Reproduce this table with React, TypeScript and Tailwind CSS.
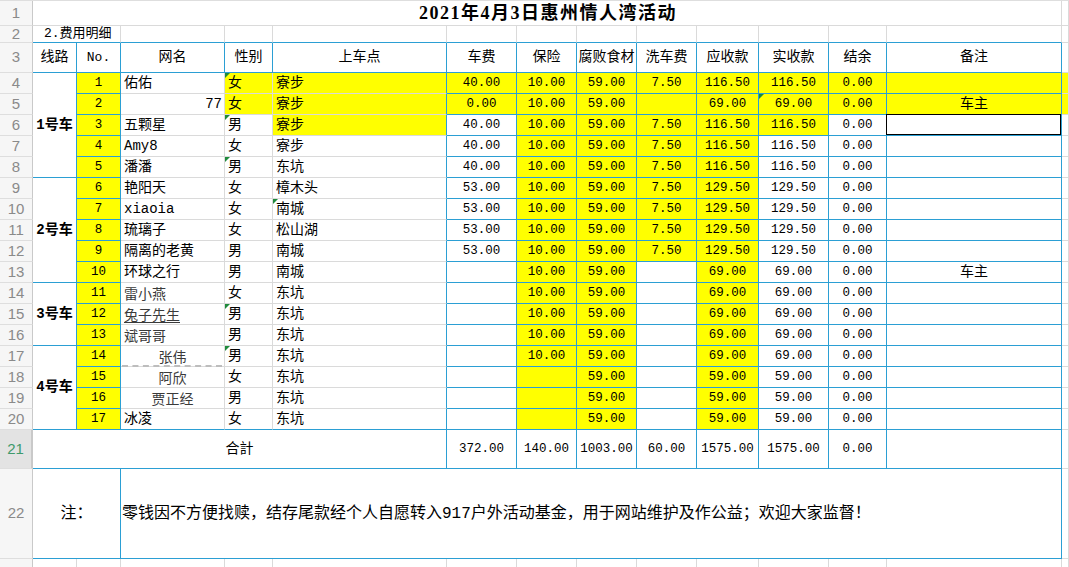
import React from 'react';

type Row = {
  no: number;
  name: string;
  nameKind?: 'right' | 'soft' | 'softU' | 'center' | 'latin';
  sex: string;
  stop: string;
  fare: string;
  ins: string;
  food: string;
  wash: string;
  due: string;
  paid: string;
  bal: string;
  note: string;
};

const rows: Row[] = [
  { no: 1, name: '佑佑', sex: '女', stop: '寮步', fare: '40.00', ins: '10.00', food: '59.00', wash: '7.50', due: '116.50', paid: '116.50', bal: '0.00', note: '' },
  { no: 2, name: '77', nameKind: 'right', sex: '女', stop: '寮步', fare: '0.00', ins: '10.00', food: '59.00', wash: '', due: '69.00', paid: '69.00', bal: '0.00', note: '车主' },
  { no: 3, name: '五颗星', sex: '男', stop: '寮步', fare: '40.00', ins: '10.00', food: '59.00', wash: '7.50', due: '116.50', paid: '116.50', bal: '0.00', note: '' },
  { no: 4, name: 'Amy8', nameKind: 'latin', sex: '女', stop: '寮步', fare: '40.00', ins: '10.00', food: '59.00', wash: '7.50', due: '116.50', paid: '116.50', bal: '0.00', note: '' },
  { no: 5, name: '潘潘', sex: '男', stop: '东坑', fare: '40.00', ins: '10.00', food: '59.00', wash: '7.50', due: '116.50', paid: '116.50', bal: '0.00', note: '' },
  { no: 6, name: '艳阳天', sex: '女', stop: '樟木头', fare: '53.00', ins: '10.00', food: '59.00', wash: '7.50', due: '129.50', paid: '129.50', bal: '0.00', note: '' },
  { no: 7, name: 'xiaoia', nameKind: 'latin', sex: '女', stop: '南城', fare: '53.00', ins: '10.00', food: '59.00', wash: '7.50', due: '129.50', paid: '129.50', bal: '0.00', note: '' },
  { no: 8, name: '琉璃子', sex: '女', stop: '松山湖', fare: '53.00', ins: '10.00', food: '59.00', wash: '7.50', due: '129.50', paid: '129.50', bal: '0.00', note: '' },
  { no: 9, name: '隔离的老黄', sex: '男', stop: '南城', fare: '53.00', ins: '10.00', food: '59.00', wash: '7.50', due: '129.50', paid: '129.50', bal: '0.00', note: '' },
  { no: 10, name: '环球之行', sex: '男', stop: '南城', fare: '', ins: '10.00', food: '59.00', wash: '', due: '69.00', paid: '69.00', bal: '0.00', note: '车主' },
  { no: 11, name: '雷小燕', nameKind: 'soft', sex: '女', stop: '东坑', fare: '', ins: '10.00', food: '59.00', wash: '', due: '69.00', paid: '69.00', bal: '0.00', note: '' },
  { no: 12, name: '兔子先生', nameKind: 'softU', sex: '男', stop: '东坑', fare: '', ins: '10.00', food: '59.00', wash: '', due: '69.00', paid: '69.00', bal: '0.00', note: '' },
  { no: 13, name: '斌哥哥', nameKind: 'soft', sex: '男', stop: '东坑', fare: '', ins: '10.00', food: '59.00', wash: '', due: '69.00', paid: '69.00', bal: '0.00', note: '' },
  { no: 14, name: '张伟', nameKind: 'center', sex: '男', stop: '东坑', fare: '', ins: '10.00', food: '59.00', wash: '', due: '69.00', paid: '69.00', bal: '0.00', note: '' },
  { no: 15, name: '阿欣', nameKind: 'center', sex: '女', stop: '东坑', fare: '', ins: '', food: '59.00', wash: '', due: '59.00', paid: '59.00', bal: '0.00', note: '' },
  { no: 16, name: '贾正经', nameKind: 'center', sex: '男', stop: '东坑', fare: '', ins: '', food: '59.00', wash: '', due: '59.00', paid: '59.00', bal: '0.00', note: '' },
  { no: 17, name: '冰凌', sex: '女', stop: '东坑', fare: '', ins: '', food: '59.00', wash: '', due: '59.00', paid: '59.00', bal: '0.00', note: '' },
];

// route label cells, keyed by the first row index of the group
const groups: Record<number, { label: string; span: string }> = {
  0: { label: '1号车', span: 'row-span-5' },
  5: { label: '2号车', span: 'row-span-5' },
  10: { label: '3号车', span: 'row-span-3' },
  13: { label: '4号车', span: 'row-span-4' },
};

const headers = ['线路', 'No.', '网名', '性别', '上车点', '车费', '保险', '腐败食材', '洗车费', '应收款', '实收款', '结余', '备注'];

const base = 'relative flex items-center whitespace-nowrap border-r border-b border-[#dadada]';
const TR = ' border-r-[#2b9fd4]';
const TB = ' border-b-[#2b9fd4]';
const YEL = ' bg-[#ffff00]';
const NUM = ' justify-center text-[12.5px]';
const rhBase = 'flex items-center justify-center border-r border-b border-r-[#c9c9c9] border-b-[#dedede] text-[15px] font-["Liberation_Sans",sans-serif]';
const rh = rhBase + ' bg-[#f6f6f6] text-[#8a8a8a]';

const commentRows = [0, 2, 4, 11, 13];

function Flag() {
  return <span className="absolute left-0 top-0 h-0 w-0 border-t-[5px] border-r-[5px] border-t-[#1f8a3c] border-r-transparent" />;
}

function NameCell({ row, last }: { row: Row; last: boolean }) {
  let cls = base + ' text-[14px]';
  if (last) cls += TB;
  let content: React.ReactNode = row.name;
  if (row.nameKind === 'right') {
    cls += ' justify-end pr-[2px] text-[12.5px]';
  } else if (row.nameKind === 'soft') {
    cls += ' pl-[3px] text-[13px] text-[#3a3a3a] font-["Noto_Sans_CJK_SC",sans-serif]';
  } else if (row.nameKind === 'softU') {
    cls += ' pl-[3px] text-[13px] text-[#3a3a3a] font-["Noto_Sans_CJK_SC",sans-serif]';
    content = <span className="underline underline-offset-2">{row.name}</span>;
  } else if (row.nameKind === 'center') {
    cls += ' justify-center text-[13px] text-[#3a3a3a] font-["Noto_Sans_CJK_SC",sans-serif]';
  } else if (row.nameKind === 'latin') {
    cls += ' pl-[3px] text-[13px]';
  } else {
    cls += ' pl-[3px]';
  }
  return (
    <div className={cls}>
      {content}
      {row.no === 14 && <span className="absolute left-[1px] right-[2px] bottom-[-1px] border-t-2 border-dashed border-[#bdbdbd]" />}
    </div>
  );
}

export default function App() {
  return (
    <div className='h-[567px] w-[1069px] overflow-hidden bg-white text-black font-["Liberation_Mono","Noto_Sans_CJK_SC",monospace]'>
      <div className="grid grid-cols-[33px_44px_44px_104px_48px_174px_70px_60px_60px_60px_62px_70px_58px_175px_1fr] grid-rows-[25px_17px_30px_repeat(17,21px)_39px_90px_21px] border-t border-[#dedede]">
        {/* row 1: title */}
        <div className={rh}>1</div>
        <div className={base + ' col-span-13 justify-center pl-[2px] text-[18px] font-bold tracking-[1.5px] font-["Liberation_Serif","Noto_Sans_CJK_SC",serif]'}>
          2021年4月3日惠州情人湾活动
        </div>
        <div className={base} />

        {/* row 2 */}
        <div className={rh}>2</div>
        <div className={base + TB + ' col-span-2 pl-[11px] text-[13px]'}>2.费用明细</div>
        {Array.from({ length: 11 }).map((_, i) => (
          <div key={i} className={base + TB} />
        ))}
        <div className={base} />

        {/* row 3: headers */}
        <div className={rh}>3</div>
        {headers.map((h, i) => (
          <div key={i} className={base + TR + TB + (h === 'No.' ? ' justify-center text-[13px]' : ' justify-center text-[14px]')}>
            {h}
          </div>
        ))}
        <div className={base} />

        {/* rows 4-20 */}
        {rows.map((row, r) => {
          const last = r === rows.length - 1;
          const g = groups[r];
          return (
            <React.Fragment key={row.no}>
              <div className={rh}>{r + 4}</div>
              {g && (
                <div className={base + TR + TB + ' ' + g.span + ' justify-center text-[14px] font-bold'}>{g.label}</div>
              )}
              <div className={base + TR + TB + YEL + NUM}>{row.no}</div>
              <NameCell row={row} last={last} />
              <div className={base + ' pl-[3px] text-[14px]' + (r < 2 ? YEL : '') + (last ? TB : '')}>
                {commentRows.includes(r) && <Flag />}
                {row.sex}
              </div>
              <div className={base + TR + ' pl-[3px] text-[14px]' + (r < 3 ? YEL : '') + (last ? TB : '')}>
                {r === 6 && <Flag />}
                {row.stop}
              </div>
              <div className={base + TR + TB + NUM + (r < 2 ? YEL : '')}>{row.fare}</div>
              <div className={base + TR + TB + NUM + YEL}>{row.ins}</div>
              <div className={base + TR + TB + NUM + YEL}>{row.food}</div>
              <div className={base + TR + TB + NUM + (r < 9 ? YEL : '')}>{row.wash}</div>
              <div className={base + TR + TB + NUM + YEL}>{row.due}</div>
              <div className={base + TR + TB + NUM + (r < 3 ? YEL : '')}>
                {r === 1 && <Flag />}
                {row.paid}
              </div>
              <div className={base + TR + TB + NUM + (r < 2 ? YEL : '')}>{row.bal}</div>
              <div className={base + TR + TB + ' justify-center text-[14px]' + (r < 2 ? YEL : '')}>
                {row.note}
                {r === 2 && <span className="absolute -left-px -top-px right-0 bottom-0 border border-black" />}
              </div>
              <div className={base + (r < 2 ? YEL : '')} />
            </React.Fragment>
          );
        })}

        {/* row 21: totals */}
        <div className={rhBase + ' bg-[#e3e3e3] text-[#3f9a6b] border-r-2 border-r-[#2f9a5e]'}>21</div>
        <div className={base + TR + TB + ' col-span-5 justify-center text-[14px]'}>合計</div>
        {['372.00', '140.00', '1003.00', '60.00', '1575.00', '1575.00', '0.00', ''].map((v, i) => (
          <div key={i} className={base + TR + TB + NUM}>{v}</div>
        ))}
        <div className={base} />

        {/* row 22: note */}
        <div className={rh}>22</div>
        <div className={base + TR + TB + ' col-span-2 justify-center text-[16px]'}>注：</div>
        <div className={base + TR + TB + ' col-span-11 pl-[1px] text-[16px]'}>
          零钱因不方便找赎，结存尾款经个人自愿转入917户外活动基金，用于网站维护及作公益；欢迎大家监督！
        </div>
        <div className={base} />

        {/* row 23, cut off by the window */}
        <div className={rh} />
        {Array.from({ length: 14 }).map((_, i) => (
          <div key={i} className={base} />
        ))}
      </div>
    </div>
  );
}
